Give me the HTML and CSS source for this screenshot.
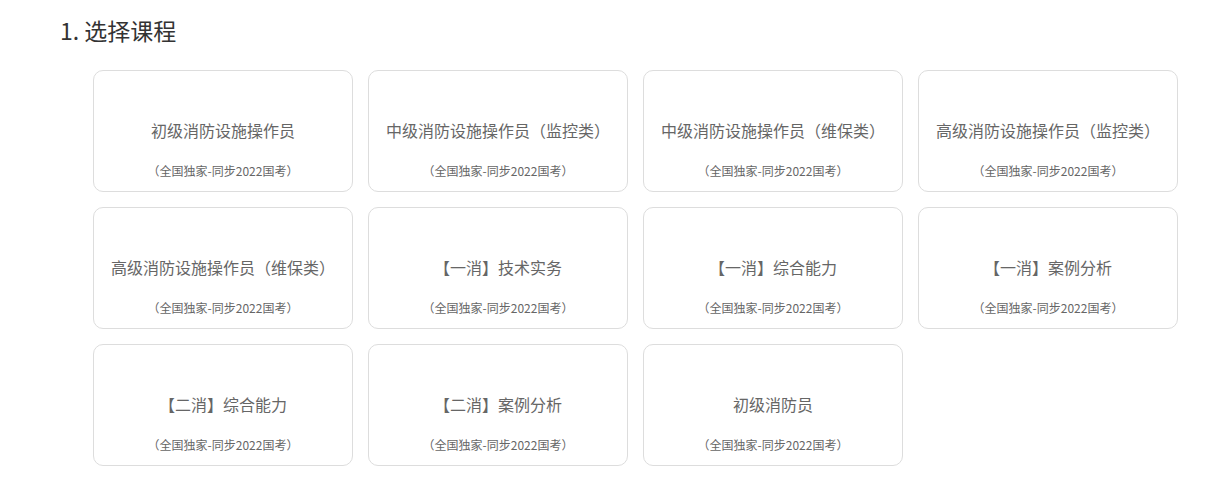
FILE: index.html
```
<!DOCTYPE html>
<html lang="zh-CN">
<head>
<meta charset="utf-8">
<title>选择课程</title>
<link rel="stylesheet" href="styles.css">
</head>
<body>
<div class="page">
  <h2 class="step-title">1. 选择课程</h2>
  <div class="course-grid">
    <div class="course-card"><div class="course-name">初级消防设施操作员</div><div class="course-note">（全国独家-同步2022国考）</div></div>
    <div class="course-card"><div class="course-name">中级消防设施操作员（监控类）</div><div class="course-note">（全国独家-同步2022国考）</div></div>
    <div class="course-card"><div class="course-name">中级消防设施操作员（维保类）</div><div class="course-note">（全国独家-同步2022国考）</div></div>
    <div class="course-card"><div class="course-name">高级消防设施操作员（监控类）</div><div class="course-note">（全国独家-同步2022国考）</div></div>
    <div class="course-card"><div class="course-name">高级消防设施操作员（维保类）</div><div class="course-note">（全国独家-同步2022国考）</div></div>
    <div class="course-card"><div class="course-name">【一消】技术实务</div><div class="course-note">（全国独家-同步2022国考）</div></div>
    <div class="course-card"><div class="course-name">【一消】综合能力</div><div class="course-note">（全国独家-同步2022国考）</div></div>
    <div class="course-card"><div class="course-name">【一消】案例分析</div><div class="course-note">（全国独家-同步2022国考）</div></div>
    <div class="course-card"><div class="course-name">【二消】综合能力</div><div class="course-note">（全国独家-同步2022国考）</div></div>
    <div class="course-card"><div class="course-name">【二消】案例分析</div><div class="course-note">（全国独家-同步2022国考）</div></div>
    <div class="course-card"><div class="course-name">初级消防员</div><div class="course-note">（全国独家-同步2022国考）</div></div>
  </div>
</div>
</body>
</html>
```
FILE: styles.css
```
html, body {
  margin: 0;
  padding: 0;
  background: #ffffff;
}
body {
  font-family: "Noto Sans CJK SC", "Noto Sans", sans-serif;
  color: #333333;
}
.page {
  padding: 14px 0 0 60px;
}
.step-title {
  margin: 0;
  font-size: 23px;
  line-height: 32px;
  font-weight: normal;
  color: #333333;
}
.course-grid {
  margin: 24px 0 0 33px;
  display: grid;
  grid-template-columns: repeat(4, 260px);
  grid-auto-rows: 122px;
  column-gap: 15px;
  row-gap: 15px;
}
.course-card {
  box-sizing: border-box;
  border: 1px solid #dddddd;
  border-radius: 10px;
  padding-top: 48px;
  text-align: center;
  background: #ffffff;
}
.course-name {
  font-size: 16px;
  line-height: 22px;
  color: #666666;
}
.course-note {
  margin-top: 22px;
  font-size: 12px;
  line-height: 16px;
  color: #666666;
}
```
